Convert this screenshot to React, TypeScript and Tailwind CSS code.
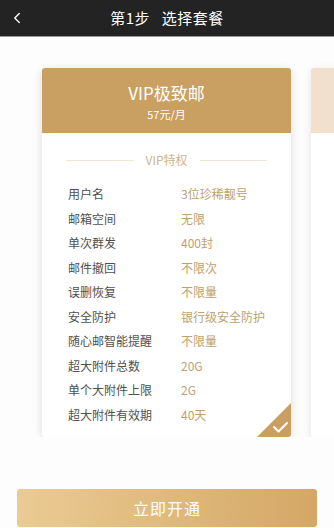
import { ChevronLeft } from 'lucide-react'

const perks: [string, string][] = [
  ['用户名', '3位珍稀靓号'],
  ['邮箱空间', '无限'],
  ['单次群发', '400封'],
  ['邮件撤回', '不限次'],
  ['误删恢复', '不限量'],
  ['安全防护', '银行级安全防护'],
  ['随心邮智能提醒', '不限量'],
  ['超大附件总数', '20G'],
  ['单个大附件上限', '2G'],
  ['超大附件有效期', '40天'],
]

function PlanCard() {
  return (
    <div className="relative w-[249px] h-[369px] shrink-0 bg-white rounded-[3px] overflow-hidden shadow-[0_2px_10px_rgba(0,0,0,0.14)]">
      <div className="h-[65px] bg-[#c9a062] flex flex-col items-center justify-center text-white pt-[3px]">
        <div className="text-[17px] leading-[22px]">VIP极致邮</div>
        <div className="text-[11px] leading-[16px] mt-[2px]">57元/月</div>
      </div>
      <div className="flex items-center justify-center gap-[12px] mt-[19px] px-[24px]">
        <div className="flex-1 h-px bg-[#efe6d6]" />
        <div className="text-[12px] leading-[16px] text-[#cdb48a]">VIP特权</div>
        <div className="flex-1 h-px bg-[#efe6d6]" />
      </div>
      <div className="mt-[14px] pl-[26px]">
        {perks.map(([k, v]) => (
          <div key={k} className="flex h-[24.5px] items-center text-[12px]">
            <div className="w-[113px] text-[#505050]">{k}</div>
            <div className="text-[#bda170]">{v}</div>
          </div>
        ))}
      </div>
      <div className="absolute right-0 bottom-0 w-[34px] h-[34px]">
        <svg width="34" height="34" viewBox="0 0 34 34">
          <polygon points="34,0 34,34 0,34" fill="#c9a062" />
          <path d="M17 24 L21.5 28.5 L30 20" stroke="#fff" strokeWidth="2" fill="none" strokeLinecap="round" strokeLinejoin="round" />
        </svg>
      </div>
    </div>
  )
}

export default function App() {
  return (
    <div
      className="w-[334px] h-[528px] overflow-hidden bg-[#fdfdfd] flex flex-col"
      style={{ fontFamily: '"Noto Sans CJK SC", "Noto Sans", sans-serif' }}
    >
      <header className="h-[37px] shrink-0 bg-[#232323] border-b border-[#9a9a9a] relative flex items-center justify-center">
        <ChevronLeft className="absolute left-[8px] top-[8px] w-[18px] h-[20px] text-white" strokeWidth={1.8} />
        <h1 className="text-[15px] text-white tracking-[0.5px]">第1步&nbsp;&nbsp;&nbsp;选择套餐</h1>
      </header>

      <div className="flex gap-[20px] pl-[42px] pt-[31px] overflow-hidden">
        <PlanCard />
        <div className="w-[249px] h-[369px] shrink-0 bg-white rounded-[3px] overflow-hidden shadow-[0_2px_10px_rgba(0,0,0,0.1)]">
          <div className="h-[65px] bg-[#f0e0cd]" />
        </div>
      </div>

      <div className="px-[17px] mt-[52px]">
        <button className="w-full h-[38px] rounded-[3px] bg-gradient-to-r from-[#ebcb94] to-[#d4a765] text-white text-[16px] tracking-[1px]">
          立即开通
        </button>
      </div>
    </div>
  )
}
